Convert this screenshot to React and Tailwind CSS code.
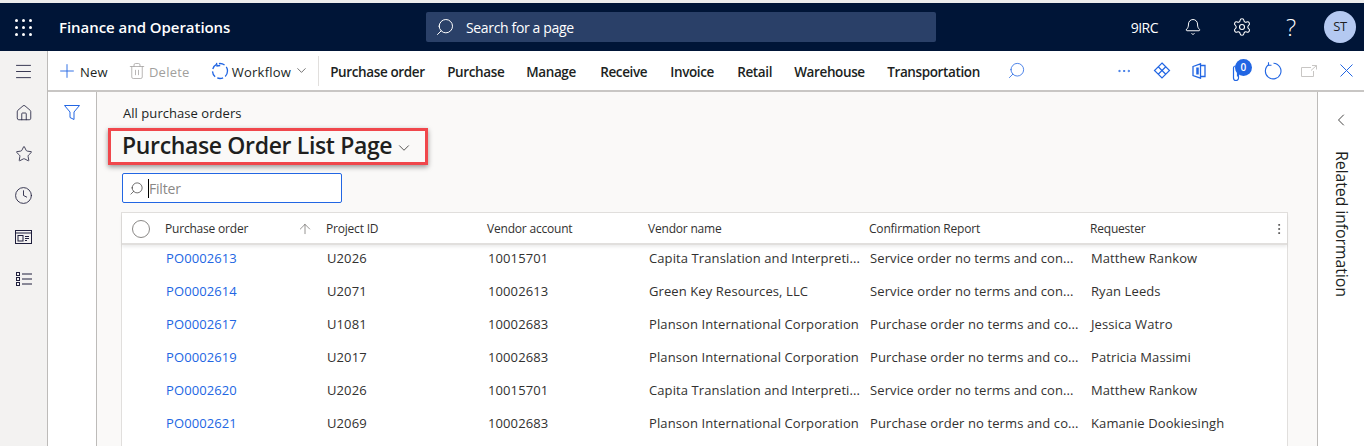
import {
  Bell,
  ChevronDown,
  ChevronLeft,
  Clock,
  Ellipsis,
  EllipsisVertical,
  Home,
  Menu,
  Plus,
  Search,
  Settings,
  Star,
  Trash2,
  ArrowUp,
} from "lucide-react";

const menus = [
  ["Purchase order", "w-[117px]"],
  ["Purchase", "w-[79px]"],
  ["Manage", "w-[74px]"],
  ["Receive", "w-[70px]"],
  ["Invoice", "w-[67px]"],
  ["Retail", "w-[57px]"],
  ["Warehouse", "w-[93px]"],
  ["Transportation", "w-[112px]"],
];

const rows = [
  ["PO0002613", "U2026", "10015701", "Capita Translation and Interpreti...", "Service order no terms and con...", "Matthew Rankow"],
  ["PO0002614", "U2071", "10002613", "Green Key Resources, LLC", "Service order no terms and con...", "Ryan Leeds"],
  ["PO0002617", "U1081", "10002683", "Planson International Corporation", "Purchase order no terms and co...", "Jessica Watro"],
  ["PO0002619", "U2017", "10002683", "Planson International Corporation", "Purchase order no terms and co...", "Patricia Massimi"],
  ["PO0002620", "U2026", "10015701", "Capita Translation and Interpreti...", "Service order no terms and con...", "Matthew Rankow"],
  ["PO0002621", "U2069", "10002683", "Planson International Corporation", "Purchase order no terms and co...", "Kamanie Dookiesingh"],
];

const Workspace = () => (
  <svg width="17" height="14" viewBox="0 0 17 14" fill="none" stroke="#1f1f3d" strokeWidth="1">
    <rect x="0.5" y="0.5" width="16" height="13" />
    <path d="M0.5 3h16" />
    <rect x="3" y="5.5" width="5" height="5.500" />
    <path d="M10 6.500h4M10 8.500h4M10 10.500h2" />
  </svg>
);

const ListIcon = () => (
  <svg width="16" height="14" viewBox="0 0 16 14" fill="none" stroke="#1f1f3d" strokeWidth="1">
    <rect x="0.500" y="0.500" width="3" height="3" />
    <rect x="0.500" y="5.500" width="3" height="3" />
    <rect x="0.500" y="10.500" width="3" height="3" />
    <path d="M6 2h10M6 7h10M6 12h10" />
  </svg>
);

const FilterIcon = () => (
  <svg width="16" height="15" viewBox="0 0 16 15" fill="none" stroke="#2266e3" strokeWidth="1">
    <path d="M0.500 0.500h15L10 7v7.500L6 12.500V7z" />
  </svg>
);

const Diamond = () => (
  <svg width="18" height="17" viewBox="0 0 18 17" fill="none" stroke="#2266e3" strokeWidth="1.200">
    <path d="M9 1l7.500 7.500L9 16 1.500 8.500z" />
    <path d="M5.200 4.800L12.800 12.200M12.800 4.800L5.200 12.200" />
  </svg>
);

const Office = () => (
  <svg width="14" height="16" viewBox="0 0 14 16" fill="none" stroke="#2266e3" strokeWidth="1.300">
    <path d="M1 3.500L8.500 0.800v14.400L1 12.500z" />
    <path d="M8.500 2.500h4.500v11H8.500" />
    <path d="M5.500 4.500v7" strokeWidth="2.500" />
  </svg>
);

const Clip = () => (
  <svg width="9" height="17" viewBox="0 0 9 17" fill="none" stroke="#2266e3" strokeWidth="1.200">
    <path d="M6.500 4v9a2.500 2.500 0 0 1-5 0V3a2 2 0 0 1 4 0v8.500" />
  </svg>
);

const Refresh = () => (
  <svg width="18" height="18" viewBox="0 0 18 18" fill="none" stroke="#2266e3" strokeWidth="1.100">
    <path d="M5 2.500A7.800 7.800 0 1 0 9.500 1.300" />
    <path d="M4.500 0.300v3h3" />
  </svg>
);

const OpenWindow = () => (
  <svg width="16" height="12" viewBox="0 0 16 12" fill="none" stroke="#c8c6c4" strokeWidth="1">
    <path d="M10 2.500H0.500v9h12V6M11 0.500h4.500v4M15.500 0.500L10 5.500" />
  </svg>
);

const CloseIcon = () => (
  <svg width="13" height="13" viewBox="0 0 13 13" fill="none" stroke="#2266e3" strokeWidth="1">
    <path d="M0.500 0.500l12 12M12.500 0.500l-12 12" />
  </svg>
);

const SyncDashed = () => (
  <svg width="18" height="18" viewBox="0 0 18 18" fill="none" stroke="#2266e3" strokeWidth="1.300">
    <circle cx="9" cy="9" r="7.500" strokeDasharray="6 2.500" />
    <path d="M5.500 0.800L6 4 9.200 3.500" />
  </svg>
);

export default function App() {
  return (
    <div className="w-[1364px] h-[446px] overflow-hidden flex flex-col bg-white font-['Open_Sans','Noto_Sans',sans-serif] text-[#201f1e]">
      <div className="h-[3px] shrink-0 bg-[#ececec]" />

      {/* Top bar */}
      <header className="h-[48px] shrink-0 bg-[#001537] flex items-center text-white">
        <div className="w-[47px] flex justify-center">
          <div className="grid grid-cols-3 gap-[4px]">
            {Array.from({ length: 9 }).map((_, i) => (
              <span key={i} className="w-[3px] h-[3px] rounded-full bg-white" />
            ))}
          </div>
        </div>
        <div className="ml-[12px] w-[367px] text-[15px] font-semibold tracking-[-0.05px]">Finance and Operations</div>
        <div className="w-[510px] h-[30px] bg-[#2a4068] rounded-[2px] flex items-center pl-[9px] gap-[11px] text-[14px] tracking-[-0.35px]">
          <Search size={20} strokeWidth={1.2} className="-scale-x-100" />
          Search for a page
        </div>
        <div className="ml-auto flex items-center">
          <span className="text-[14px] tracking-[-0.5px] mr-[26px]">9IRC</span>
          <Bell size={18} strokeWidth={1.3} className="mr-[30px]" />
          <Settings size={20} strokeWidth={1.3} className="mr-[32px]" />
          <span className="text-[24px] font-light mr-[26px] w-[14px] text-center">?</span>
          <span className="w-[32px] h-[32px] mr-[8px] rounded-full bg-[#b4c9f1] text-[#201f1e] flex items-center justify-center text-[13px] tracking-[-0.3px]">ST</span>
        </div>
      </header>

      <div className="flex flex-1 min-h-0">
        {/* Left rail */}
        <nav className="w-[48px] shrink-0 bg-[#f3f2f1] border-r border-[#bdbbb9] flex flex-col items-center text-[#1f1f3d]">
          <div className="h-[41px] flex items-center"><Menu size={21} strokeWidth={1} /></div>
          <div className="h-[41.500px] flex items-center"><Home size={18} strokeWidth={1.1} /></div>
          <div className="h-[41.500px] flex items-center"><Star size={18} strokeWidth={1.1} /></div>
          <div className="h-[41.500px] flex items-center"><Clock size={19} strokeWidth={1.1} /></div>
          <div className="h-[41.500px] flex items-center"><Workspace /></div>
          <div className="h-[41.500px] flex items-center"><ListIcon /></div>
        </nav>

        <div className="flex-1 min-w-0 flex flex-col">
          {/* Action bar */}
          <div className="h-[41px] shrink-0 border-b-2 border-[#c8c6c4] flex items-center text-[13px] tracking-[0.25px]">
            <button className="ml-[8px] flex items-center gap-[2px]">
              <Plus size={22} strokeWidth={1} className="text-[#2266e3]" />
              <span className="pt-[4px]">New</span>
            </button>
            <button className="ml-[20px] flex items-center gap-[3px] text-[#a19f9d]">
              <Trash2 size={18} strokeWidth={1} />
              <span className="pt-[4px]">Delete</span>
            </button>
            <button className="ml-[21px] flex items-center gap-[3px]">
              <SyncDashed />
              <span className="pt-[4px]">Workflow</span>
              <ChevronDown size={15} strokeWidth={1} />
            </button>
            <div className="w-px h-[30px] bg-[#e1dfdd] ml-[9px] mr-[11px]" />
            {menus.map(([m, w]) => (
              <span key={m} className={`${w} shrink-0 pt-[4px] text-[13.5px] font-semibold tracking-[-0.38px]`}>{m}</span>
            ))}
            <Search size={19} strokeWidth={1} className="-scale-x-100 text-[#2266e3] ml-[8px]" />
            <div className="ml-auto flex items-center text-[#2266e3]">
              <Ellipsis size={16} strokeWidth={1.3} className="mr-[21px]" />
              <Diamond />
              <span className="w-[21px]" />
              <Office />
              <span className="w-[26px]" />
              <div className="relative mr-[23px] mt-[6px]">
                <Clip />
                <span className="absolute -top-[6px] left-[3px] w-[17px] h-[17px] rounded-full bg-[#2266e3] text-white text-[10px] font-semibold flex items-center justify-center">0</span>
              </div>
              <Refresh />
              <span className="w-[19px]" />
              <OpenWindow />
              <span className="w-[23px]" />
              <CloseIcon />
              <span className="w-[11px]" />
            </div>
          </div>

          <div className="flex-1 min-h-0 flex">
            {/* Filter pane */}
            <div className="w-[49px] shrink-0 border-r border-[#bdbbb9] flex justify-center pt-[13px]">
              <FilterIcon />
            </div>

            {/* Main */}
            <main className="flex-1 min-w-0 bg-[#faf9f8] pl-[25px] pr-[29px] overflow-hidden">
              <div className="mt-[12px] ml-px text-[13px] leading-[18px] tracking-[0.05px]">All purchase orders</div>
              <div className="mt-[6px] -ml-[14px] w-[320px] h-[37px] flex items-center pl-[11px] pb-[3px] border-[3px] border-[#f0474c] shadow-[0_2px_5px_rgba(0,0,0,0.4)]">
                <span className="text-[23px] font-semibold tracking-[-0.35px] whitespace-nowrap">Purchase Order List Page</span>
                <ChevronDown size={18} strokeWidth={1} className="ml-[3px] mt-[6px]" />
              </div>
              <div className="mt-[8px] w-[220px] h-[30px] bg-white border border-[#2266e3] rounded-[2px] flex items-center pl-[6px] text-[14px] tracking-[-0.2px] text-[#8a8886]">
                <Search size={15} strokeWidth={1} className="-scale-x-100 text-[#201f1e] mr-[4px]" />
                <span className="w-px h-[19px] bg-black" />
                Filter
              </div>

              {/* Grid */}
              <div className="mt-[9px] -ml-[1px] h-[300px] bg-white border border-[#e1dfdd] border-b-0">
                <div className="h-[32px] pt-[2px] flex items-center border-b-2 border-[#e1dfdd] shadow-[0_2px_3px_rgba(0,0,0,0.08)] text-[12px] text-[#323130] tracking-[-0.2px] relative">
                  <span className="ml-[10px] mr-[15px] w-[18px] h-[18px] rounded-full border border-[#8a8886] shrink-0" />
                  <span className="w-[136px] shrink-0">Purchase order</span>
                  <span className="w-[25px] shrink-0"><ArrowUp size={16} strokeWidth={1} className="-ml-[4px] text-[#605e5c]" /></span>
                  <span className="w-[161px] shrink-0">Project ID</span>
                  <span className="w-[161px] shrink-0">Vendor account</span>
                  <span className="w-[221px] shrink-0">Vendor name</span>
                  <span className="w-[221px] shrink-0">Confirmation Report</span>
                  <span>Requester</span>
                  <EllipsisVertical size={14} strokeWidth={1.2} className="absolute right-[1px]" />
                </div>
                <div className="-mt-[3px]">
                  {rows.map((r) => (
                    <div key={r[0]} className="h-[33px] flex items-center text-[13px] text-[#323130] tracking-[0.1px] whitespace-nowrap">
                      <a className="ml-[44px] w-[161px] shrink-0 text-[#2266e3]">{r[0]}</a>
                      <span className="w-[161px] shrink-0">{r[1]}</span>
                      <span className="w-[161px] shrink-0">{r[2]}</span>
                      <span className="w-[221px] shrink-0">{r[3]}</span>
                      <span className="w-[221px] shrink-0">{r[4]}</span>
                      <span>{r[5]}</span>
                    </div>
                  ))}
                </div>
              </div>
            </main>

            {/* Related information */}
            <aside className="w-[47px] shrink-0 border-l border-[#bdbbb9] flex flex-col items-center pt-[18px]">
              <ChevronLeft size={20} strokeWidth={1} />
              <span className="mt-[21px] ml-[2px] text-[16px] tracking-[-0.15px] [writing-mode:vertical-rl] whitespace-nowrap">Related information</span>
            </aside>
          </div>
        </div>
      </div>
    </div>
  );
}
